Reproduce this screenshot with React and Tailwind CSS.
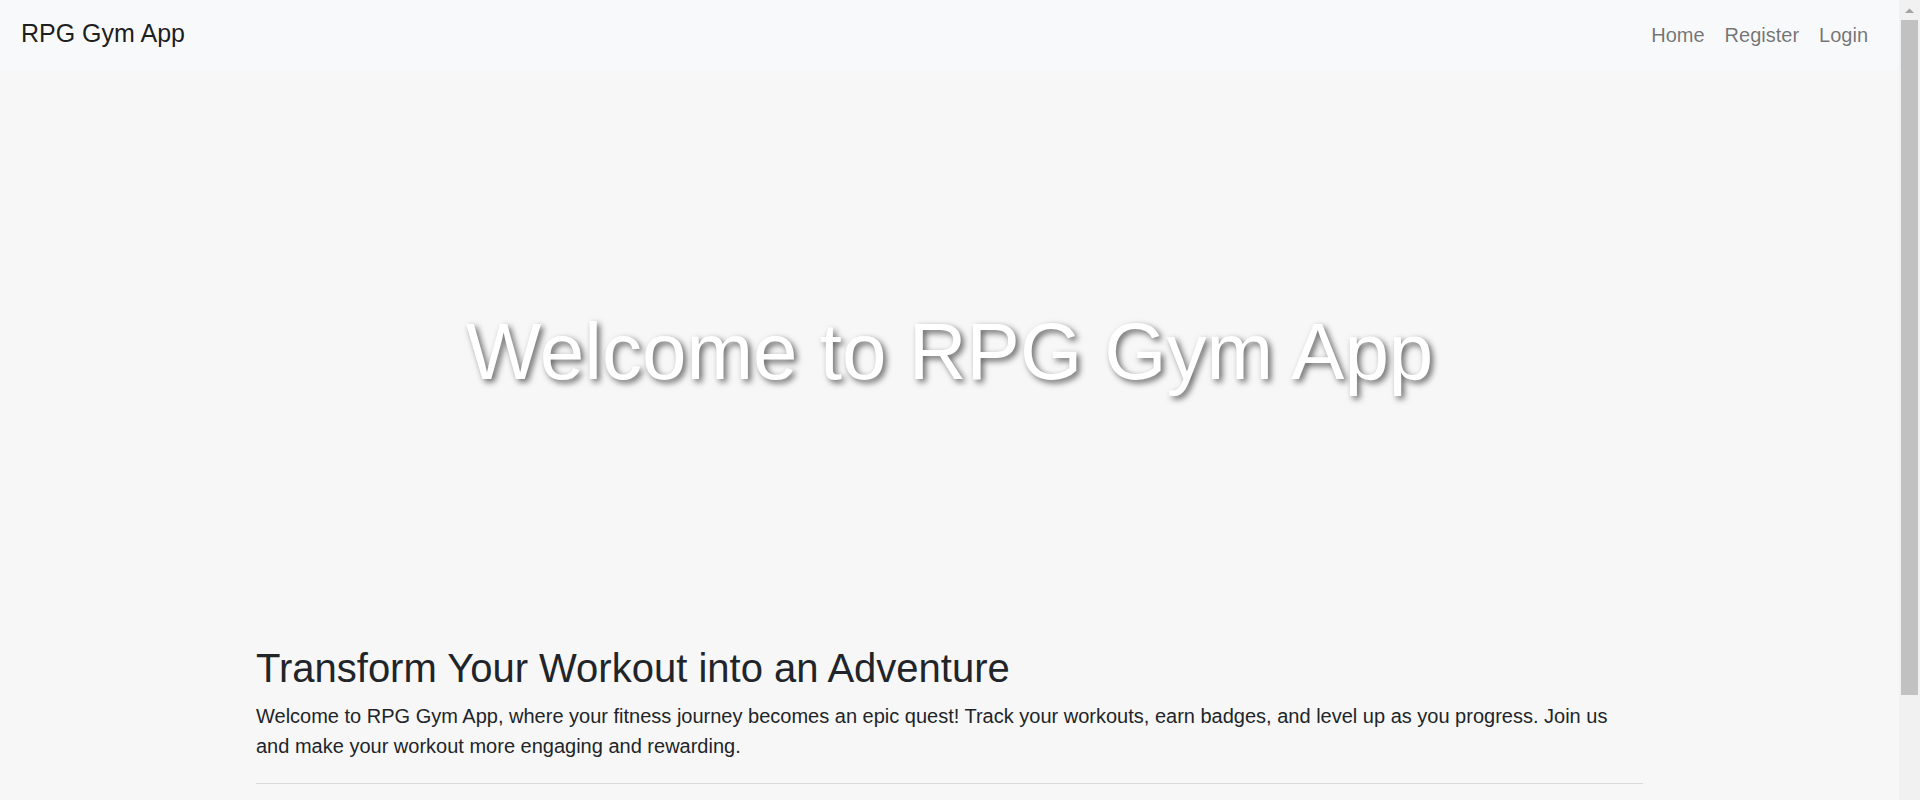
function FakeScrollbar() {
  return (
    <div className="w-[21px] shrink-0 bg-[#f1f1f1] flex flex-col items-center">
      <svg width="21" height="20" viewBox="0 0 21 20" className="shrink-0">
        <polygon points="6,13 10.5,8.5 15,13" fill="#a3a3a3" />
      </svg>
      <div className="w-[17px] h-[675px] bg-[#c1c1c1]" />
    </div>
  );
}

export default function App() {
  return (
    <div className="flex h-screen overflow-hidden font-['Liberation_Sans',Arial,sans-serif]">
      <div className="flex-1 min-w-0 overflow-hidden bg-[#f7f7f7] text-[#212529]">
        <nav className="h-[70px] bg-[#f8f9fa] flex items-baseline justify-between pt-[15px] pl-[21px] pr-[31px]">
          <a href="#" className="text-[25px] leading-[36px] text-[rgba(0,0,0,0.9)]">RPG Gym App</a>
          <ul className="flex items-baseline gap-[20px]">
            <li><a href="#" className="text-[20px] leading-[30px] text-[rgba(0,0,0,0.55)]">Home</a></li>
            <li><a href="#" className="text-[20px] leading-[30px] text-[rgba(0,0,0,0.55)]">Register</a></li>
            <li><a href="#" className="text-[20px] leading-[30px] text-[rgba(0,0,0,0.55)]">Login</a></li>
          </ul>
        </nav>
        <header className="h-[564px] flex items-center justify-center">
          <h1 className="text-[80px] leading-[96px] text-white [text-shadow:3px_3px_6px_rgba(0,0,0,0.6)]">Welcome to RPG Gym App</h1>
        </header>
        <main className="mx-auto w-[1387px] pt-[10px] pb-[140px]">
          <h2 className="text-[40px] leading-[48px] mb-[9px]">Transform Your Workout into an Adventure</h2>
          <p className="text-[20px] leading-[30px]">
            Welcome to RPG Gym App, where your fitness journey becomes an epic quest! Track your workouts, earn badges, and level up as you progress. Join us and make your workout more engaging and rewarding.
          </p>
          <hr className="mt-[22px] border-0 border-t border-[#dadada]" />
        </main>
      </div>
      <FakeScrollbar />
    </div>
  );
}
